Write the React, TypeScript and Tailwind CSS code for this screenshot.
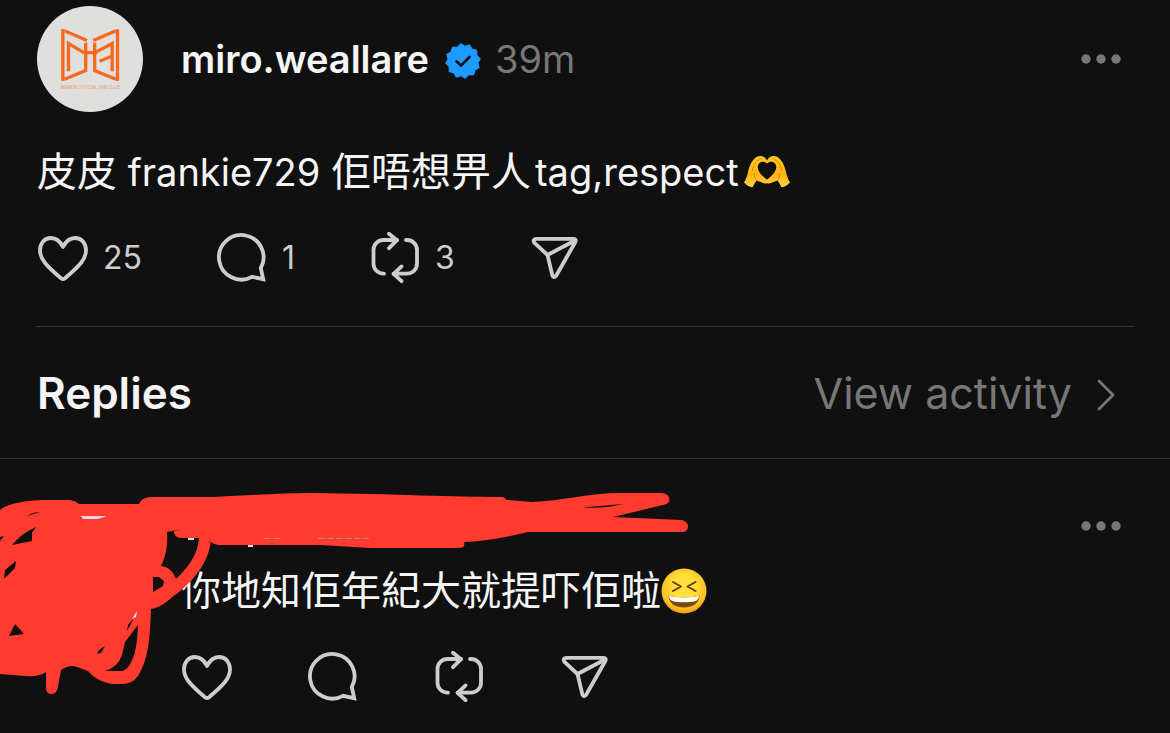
import type { ReactNode } from 'react'

function HeartIcon() {
    return (
        <svg viewBox="0 0 52 52" className="size-13" fill="none" stroke="currentColor" strokeWidth="3.8" strokeLinejoin="round">
            <path d="M26 15C23 9 18.5 6 14 6C7.5 6 3 11 3 18.5C3 27 9 33.5 24 46.3Q26 47.8 28 46.3C43 33.5 49 27 49 18.5C49 11 44.5 6 38 6C33.5 6 29 9 26 15Z" />
        </svg>
    )
}

function CommentIcon() {
    return (
        <svg viewBox="0 0 52 52" className="size-13" fill="none" stroke="currentColor" strokeWidth="3.8">
            <path d="M44.8 36A22.3 22.3 0 1 0 36 44.8L47.2 47.2Z" />
        </svg>
    )
}

function RepostIcon() {
    return (
        <svg viewBox="0 0 52 52" className="size-13" fill="none" stroke="currentColor" strokeWidth="3.8" strokeLinecap="round" strokeLinejoin="round">
            <path d="M15 41.7H14.5A10 10 0 0 1 4.5 31.7V18A10 10 0 0 1 14.5 8H28" />
            <path d="M20 1.8L28 8.2L20 16.2" />
            <path d="M37 8H38A10 10 0 0 1 48 18V31.7A10 10 0 0 1 38 41.7H24.5" />
            <path d="M32.6 34.4L24.6 41.8L32.6 49.2" />
        </svg>
    )
}

function ShareIcon() {
    return (
        <svg viewBox="0 0 52 52" className="size-13" fill="none" stroke="currentColor" strokeWidth="3.8" strokeLinejoin="round">
            <path d="M7.2 6.8H44.5Q48 7 46.2 10.2L27 44Q24.7 46.6 23.4 43.5L18.5 23L5.2 10.6Q3.3 7.4 7.2 6.8Z" />
            <path d="M18.5 23L46.5 8.2" />
        </svg>
    )
}

function VerifiedBadge() {
    const points = Array.from({ length: 24 }, (_, i) => {
        const r = i % 2 ? 15 : 17.5
        const a = (Math.PI * (i - 0.5)) / 12
        return `${(18 + r * Math.cos(a)).toFixed(2)},${(18 + r * Math.sin(a)).toFixed(2)}`
    }).join(' ')

    return (
        <svg viewBox="0 0 36 36" className="size-9" role="img" aria-label="Verified">
            <polygon points={points} fill="#1d9bff" stroke="#1d9bff" strokeWidth="1" strokeLinejoin="round" />
            <path d="M11.5 18.3L16 22.6L24.5 14" fill="none" stroke="#101010" strokeWidth="2.6" strokeLinecap="round" strokeLinejoin="round" />
        </svg>
    )
}

function Avatar() {
    return (
        <svg viewBox="20 17 320 320" className="size-[106px] shrink-0" role="img" aria-label="miro.weallare">
            <circle cx="180" cy="177" r="160" fill="#dfdfdd" />
            <g fill="none" stroke="#f9691c" strokeWidth="10">
                <path d="M98 87V243" />
                <path d="M103 92L171 121" />
                <path d="M103 238L171 210" />
                <path d="M115 214V130L165 160" />
                <path d="M167 128V209" />
                <path d="M163 158H201" />
                <path d="M263 87V243" />
                <path d="M258 92L190 121" />
                <path d="M258 238L190 210" />
                <path d="M194 128V209" />
                <path d="M194 158L247 130V214" />
                <path d="M209 184L247 168" />
            </g>
            <text x="181" y="267" textAnchor="middle" fontSize="13" fill="#f0925f" fontFamily="Inter, sans-serif">
                MIRROR OFFICIAL FAN CLUB
            </text>
        </svg>
    )
}

function HeartHands() {
    return (
        <svg viewBox="0 0 48 36" className="h-9 w-12 shrink-0" role="img" aria-label="heart hands">
            <defs>
                <linearGradient id="hand" x1="0" y1="0" x2="0" y2="1">
                    <stop offset="0" stopColor="#ffc928" />
                    <stop offset="0.6" stopColor="#fdb50f" />
                    <stop offset="1" stopColor="#ffd54a" />
                </linearGradient>
            </defs>
            {['', 'translate(48 0) scale(-1 1)'].map((transform) => (
                <g key={transform} transform={transform || undefined}>
                    <path
                        d="M1 28.500C3 25.500 4 22 5 18C6.500 11 9.500 5 14.500 2.500C18.500 0.800 22.500 3 24 6.500V9.500C21.500 7 18 7 16 9.500C12.500 14 16.500 20 24 25.500V29Q23 30 21 29.200L13.500 26.500Q11.500 29 9.500 33.200Q4.500 32.500 1 28.500Z"
                        fill="url(#hand)"
                    />
                    <path d="M9.500 17C10 11 13 6.500 18.500 4.500M13.500 26.500C11.500 24.500 11 22 11.500 19" fill="none" stroke="#de8a0c" strokeWidth="1" />
                </g>
            ))}
        </svg>
    )
}

function LaughingFace() {
    return (
        <svg viewBox="0 0 46 46" className="size-[46px] shrink-0" role="img" aria-label="laughing">
            <defs>
                <radialGradient id="face" cx="0.5" cy="0.4" r="0.62">
                    <stop offset="0.4" stopColor="#ffdf38" />
                    <stop offset="0.8" stopColor="#fdbf26" />
                    <stop offset="1" stopColor="#ee8f12" />
                </radialGradient>
            </defs>
            <circle cx="23" cy="23" r="22.5" fill="url(#face)" />
            <path d="M12 14L20 18.500L12 23M34.500 14L26.500 18.500L34.500 23" fill="none" stroke="#6b3d08" strokeWidth="2" strokeLinecap="round" strokeLinejoin="round" />
            <path d="M7.500 27.500C16 30 30 30 38.500 27.500C38 36 31 39.500 23 39.500S8 36 7.500 27.500Z" fill="#7b4a0b" />
            <path d="M7.800 27.800C16 30 30 30 38.200 27.800C37.500 31.500 35.500 33.200 34 33.200C28 34.500 18 34.500 12 33.200C10 33 8.300 30.500 7.800 27.800Z" fill="#fffdf5" />
        </svg>
    )
}

function MoreButton() {
    return (
        <button type="button" aria-label="More" className="ml-auto flex w-[66px] justify-center text-[#777]">
            <svg viewBox="0 0 40 10" className="h-[10px] w-10" fill="currentColor">
                <circle cx="5" cy="5" r="4.7" />
                <circle cx="20" cy="5" r="4.7" />
                <circle cx="35" cy="5" r="4.7" />
            </svg>
        </button>
    )
}

interface ActionProps {
    label: string
    count?: number
    children: ReactNode
}

function Action({ label, count, children }: ActionProps) {
    return (
        <button type="button" aria-label={label} className="flex items-center gap-[14px]">
            {children}
            {count !== undefined && <span className="text-[32px] leading-13">{count}</span>}
        </button>
    )
}

interface ActionsProps {
    likes?: number
    comments?: number
    reposts?: number
}

function Actions({ likes, comments, reposts }: ActionsProps) {
    return (
        <div className="mt-[34px] flex gap-[74px] text-[#cdcdcd]">
            <Action label="Like" count={likes}><HeartIcon /></Action>
            <Action label="Reply" count={comments}><CommentIcon /></Action>
            <Action label="Repost" count={reposts}><RepostIcon /></Action>
            <Action label="Share"><ShareIcon /></Action>
        </div>
    )
}

// Marker strokes that hide the replier's avatar and name
function Scribble() {
    return (
        <svg viewBox="0 459 700 240" className="pointer-events-none absolute top-0 left-0 h-60 w-[700px]" aria-hidden="true">
            <path
                fill="#ff3b30"
                d="M0 510C8 503 30 500 45 500H70Q76 501 79 504H139Q141 498 150 497H215C250 495 290 493 310 493C400 494 450 497 503 497L507 500L532 502C560 501 590 493 620 493H662Q669.500 494 669.500 500Q669 504 663 505L613 517L682 520Q688 522 688 526Q688 532 682 532H528C510 536 490 541 464 542Q466 548 458 548H370L320 545H218Q213 544 211 542L210 538H182Q173 537 174 531L183 529L167 532C168 548 165 558 161 566Q171 567 175 577L182 588C166 604 158 608 151 609C150 640 148 660 138 676Q132 684 122 684H112C100 682 93 677 88 671L77 667Q70 664 61 670L58 686Q57 694 52 694Q46 694 46 688V672Q40 677 25 676L0 674Z"
            />
            <path d="M205 538C204 558 190 576 172 590" fill="none" stroke="#ff3b30" strokeWidth="12" />
            <g fill="#101010">
                <path d="M153 577L159 577L164 581L163 586L153 592Z" />
                <path d="M138 625L137 640Q135 655 132 660Q129 668 123 671L105 671Q118 667 122 655L125 642Z" />
                <path d="M134 618L128 625L127 631Z" />
                <path d="M105 646L99 650L97 654L101 653Z" />
                <path d="M16 561L5 570L4 579L15 568Z" />
                <path d="M36 527Q22 533 12 545L32 541L32 533Z" />
                <path d="M15 624L9 636L24 634Z" />
                <path d="M40 512Q33 512 27 516Z" />
                <path d="M583 507.500L623 504Q602 509 583 507.500Z" />
                <path d="M12 592L8 596L13 591ZM0 537L4 536L0 541Z" />
            </g>
            <g fill="#e8d5e6">
                <path d="M81 516L107 516L98 519L83 519Z" />
                <path d="M137 611L132 619L136 617Z" />
                <path d="M188 538H194V540H188ZM248 545H253V547H248Z" />
            </g>
            <path d="M264 538.500H280M318 538.500H369" fill="none" stroke="#b98783" strokeWidth="1" strokeDasharray="7 2" />
        </svg>
    )
}

export default function App() {
    return (
        <main className="min-h-screen bg-[#101010] font-[Inter,'Noto_Sans_CJK_TC',sans-serif] text-[#f5f5f5]">
            <article className="mr-9 ml-9 border-b border-[#323232] pt-[6px] pb-[42px] pl-px">
                <header className="flex items-center">
                    <Avatar />
                    <h1 className="ml-[38px] text-[38px] leading-13 font-semibold">miro.weallare</h1>
                    <div className="ml-4 mt-1"><VerifiedBadge /></div>
                    <time className="ml-[14px] text-[38px] leading-13 text-[#777]">39m</time>
                    <MoreButton />
                </header>
                <p className="mt-[34px] flex items-center gap-1 text-[38px] leading-13">
                    <span>
                        <span className="text-[40px]">皮皮</span> frankie729 <span className="mr-1 text-[40px]">佢唔想畀人</span>tag,respect
                    </span>
                    <HeartHands />
                </p>
                <Actions likes={25} comments={1} reposts={3} />
            </article>

            <section className="flex h-33 items-center border-b border-[#323232] pr-[54px] pl-[37px]">
                <h2 className="text-[44px] leading-13 font-semibold">Replies</h2>
                <a href="#activity" className="ml-auto flex items-center gap-6 text-[43px] leading-13 text-[#777]">
                    View activity
                    <svg viewBox="0 0 20 32" className="mt-1 h-8 w-5" fill="none" stroke="currentColor" strokeWidth="2.8" strokeLinecap="round" strokeLinejoin="round">
                        <path d="M3 2L17 16L3 30" />
                    </svg>
                </a>
            </section>

            <article className="relative pt-[41px] pr-9 pb-[30px] pl-[181px]">
                <header className="flex h-13 items-center">
                    <MoreButton />
                </header>
                <p className="mt-[13px] flex items-center text-[40px] leading-13">
                    <span>你地知佢年紀大就提吓佢啦</span>
                    <LaughingFace />
                </p>
                <Actions />
                <Scribble />
            </article>
        </main>
    )
}
